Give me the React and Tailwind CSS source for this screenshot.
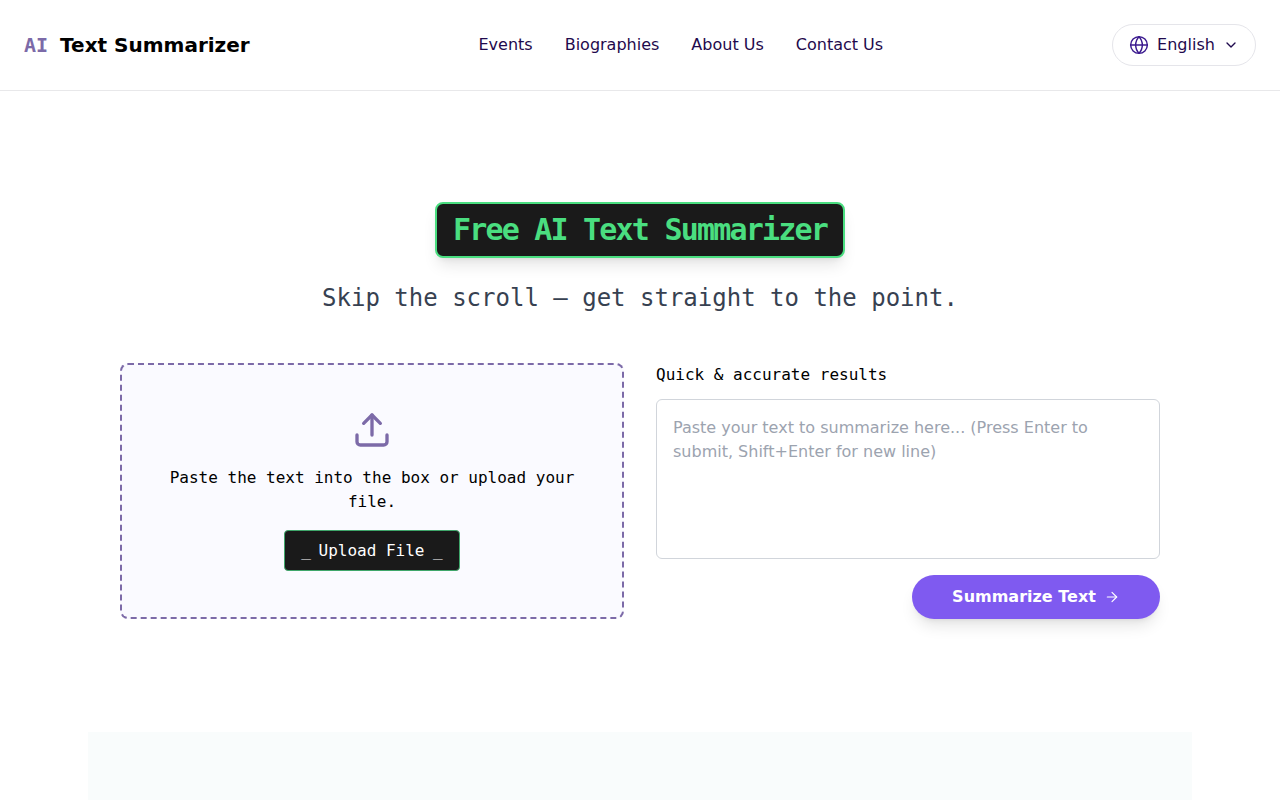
import React from 'react'
import { ArrowRight, ChevronDown, Globe, Upload } from 'lucide-react'

const sans = "font-['DejaVu_Sans',sans-serif]"
const mono = "font-['DejaVu_Sans_Mono',monospace]"

function Header() {
  return (
    <header className="h-[91px] border-b border-[#e8e8ea] bg-white flex items-center justify-between px-6">
      <div className="flex items-center gap-3">
        <span className={`${mono} text-xl font-bold text-[#7c6aa8]`}>AI</span>
        <span className="text-xl font-bold text-black">Text Summarizer</span>
      </div>
      <nav className="flex items-center gap-8 text-[#1f0a4d]">
        <a href="#">Events</a>
        <a href="#">Biographies</a>
        <a href="#">About Us</a>
        <a href="#">Contact Us</a>
      </nav>
      <button className="h-[42px] w-36 rounded-full border border-[#e5e5ea] flex items-center justify-center gap-2 text-[#1f0a4d]">
        <Globe className="w-5 h-5 text-[#3b1a8f]" strokeWidth={1.75} />
        <span>English</span>
        <ChevronDown className="w-4 h-4" strokeWidth={2} />
      </button>
    </header>
  )
}

export default function App() {
  return (
    <div className={`${sans} h-[800px] overflow-hidden bg-white`}>
      <Header />
      <main className="pt-[111px] flex flex-col items-center">
        <h1 className={`${mono} text-3xl font-bold tracking-[-1.8px] text-[#4ade80] bg-[#1a1a1a] border-2 border-[#4ade80] rounded-lg px-4 py-2 shadow-lg`}>
          Free AI Text Summarizer
        </h1>
        <p className={`${mono} text-2xl leading-8 text-[#374151] mt-6`}>
          Skip the scroll — get straight to the point.
        </p>
        <section className="w-[1040px] mt-[49px] grid grid-cols-2 gap-8">
          <div className="h-64 rounded-lg border-2 border-dashed border-[#7c6aa8] bg-[#fafaff] flex flex-col items-center pt-[45px] px-11">
            <Upload className="w-10 h-10 text-[#7c6aa8]" strokeWidth={2} />
            <p className={`${mono} text-center leading-6 text-black mt-4`}>
              Paste the text into the box or upload your file.
            </p>
            <button className={`${mono} mt-4 h-[41px] w-[176px] rounded border border-[#3fa66a] bg-[#1a1a1a] text-white`}>
              <span className="-mr-0.5">_</span> Upload File <span className="-ml-px">_</span>
            </button>
          </div>
          <div className="flex flex-col">
            <label className={`${mono} leading-6 text-black`}>Quick &amp; accurate results</label>
            <textarea
              className="mt-3 h-40 w-full resize-none rounded-md border border-[#d1d5db] px-4 py-4 text-base leading-6 outline-none placeholder:text-[#9ca3af]"
              placeholder="Paste your text to summarize here... (Press Enter to submit, Shift+Enter for new line)"
            />
            <div className="flex justify-end mt-4">
              <button className="h-11 w-[248px] rounded-full bg-[#7f5af0] text-white font-bold flex items-center justify-center gap-2 shadow-lg">
                Summarize Text
                <ArrowRight className="w-4 h-4" strokeWidth={1.75} />
              </button>
            </div>
          </div>
        </section>
        <div className="w-[1104px] h-20 mt-[113px] bg-[#f9fcfc]" />
      </main>
    </div>
  )
}
